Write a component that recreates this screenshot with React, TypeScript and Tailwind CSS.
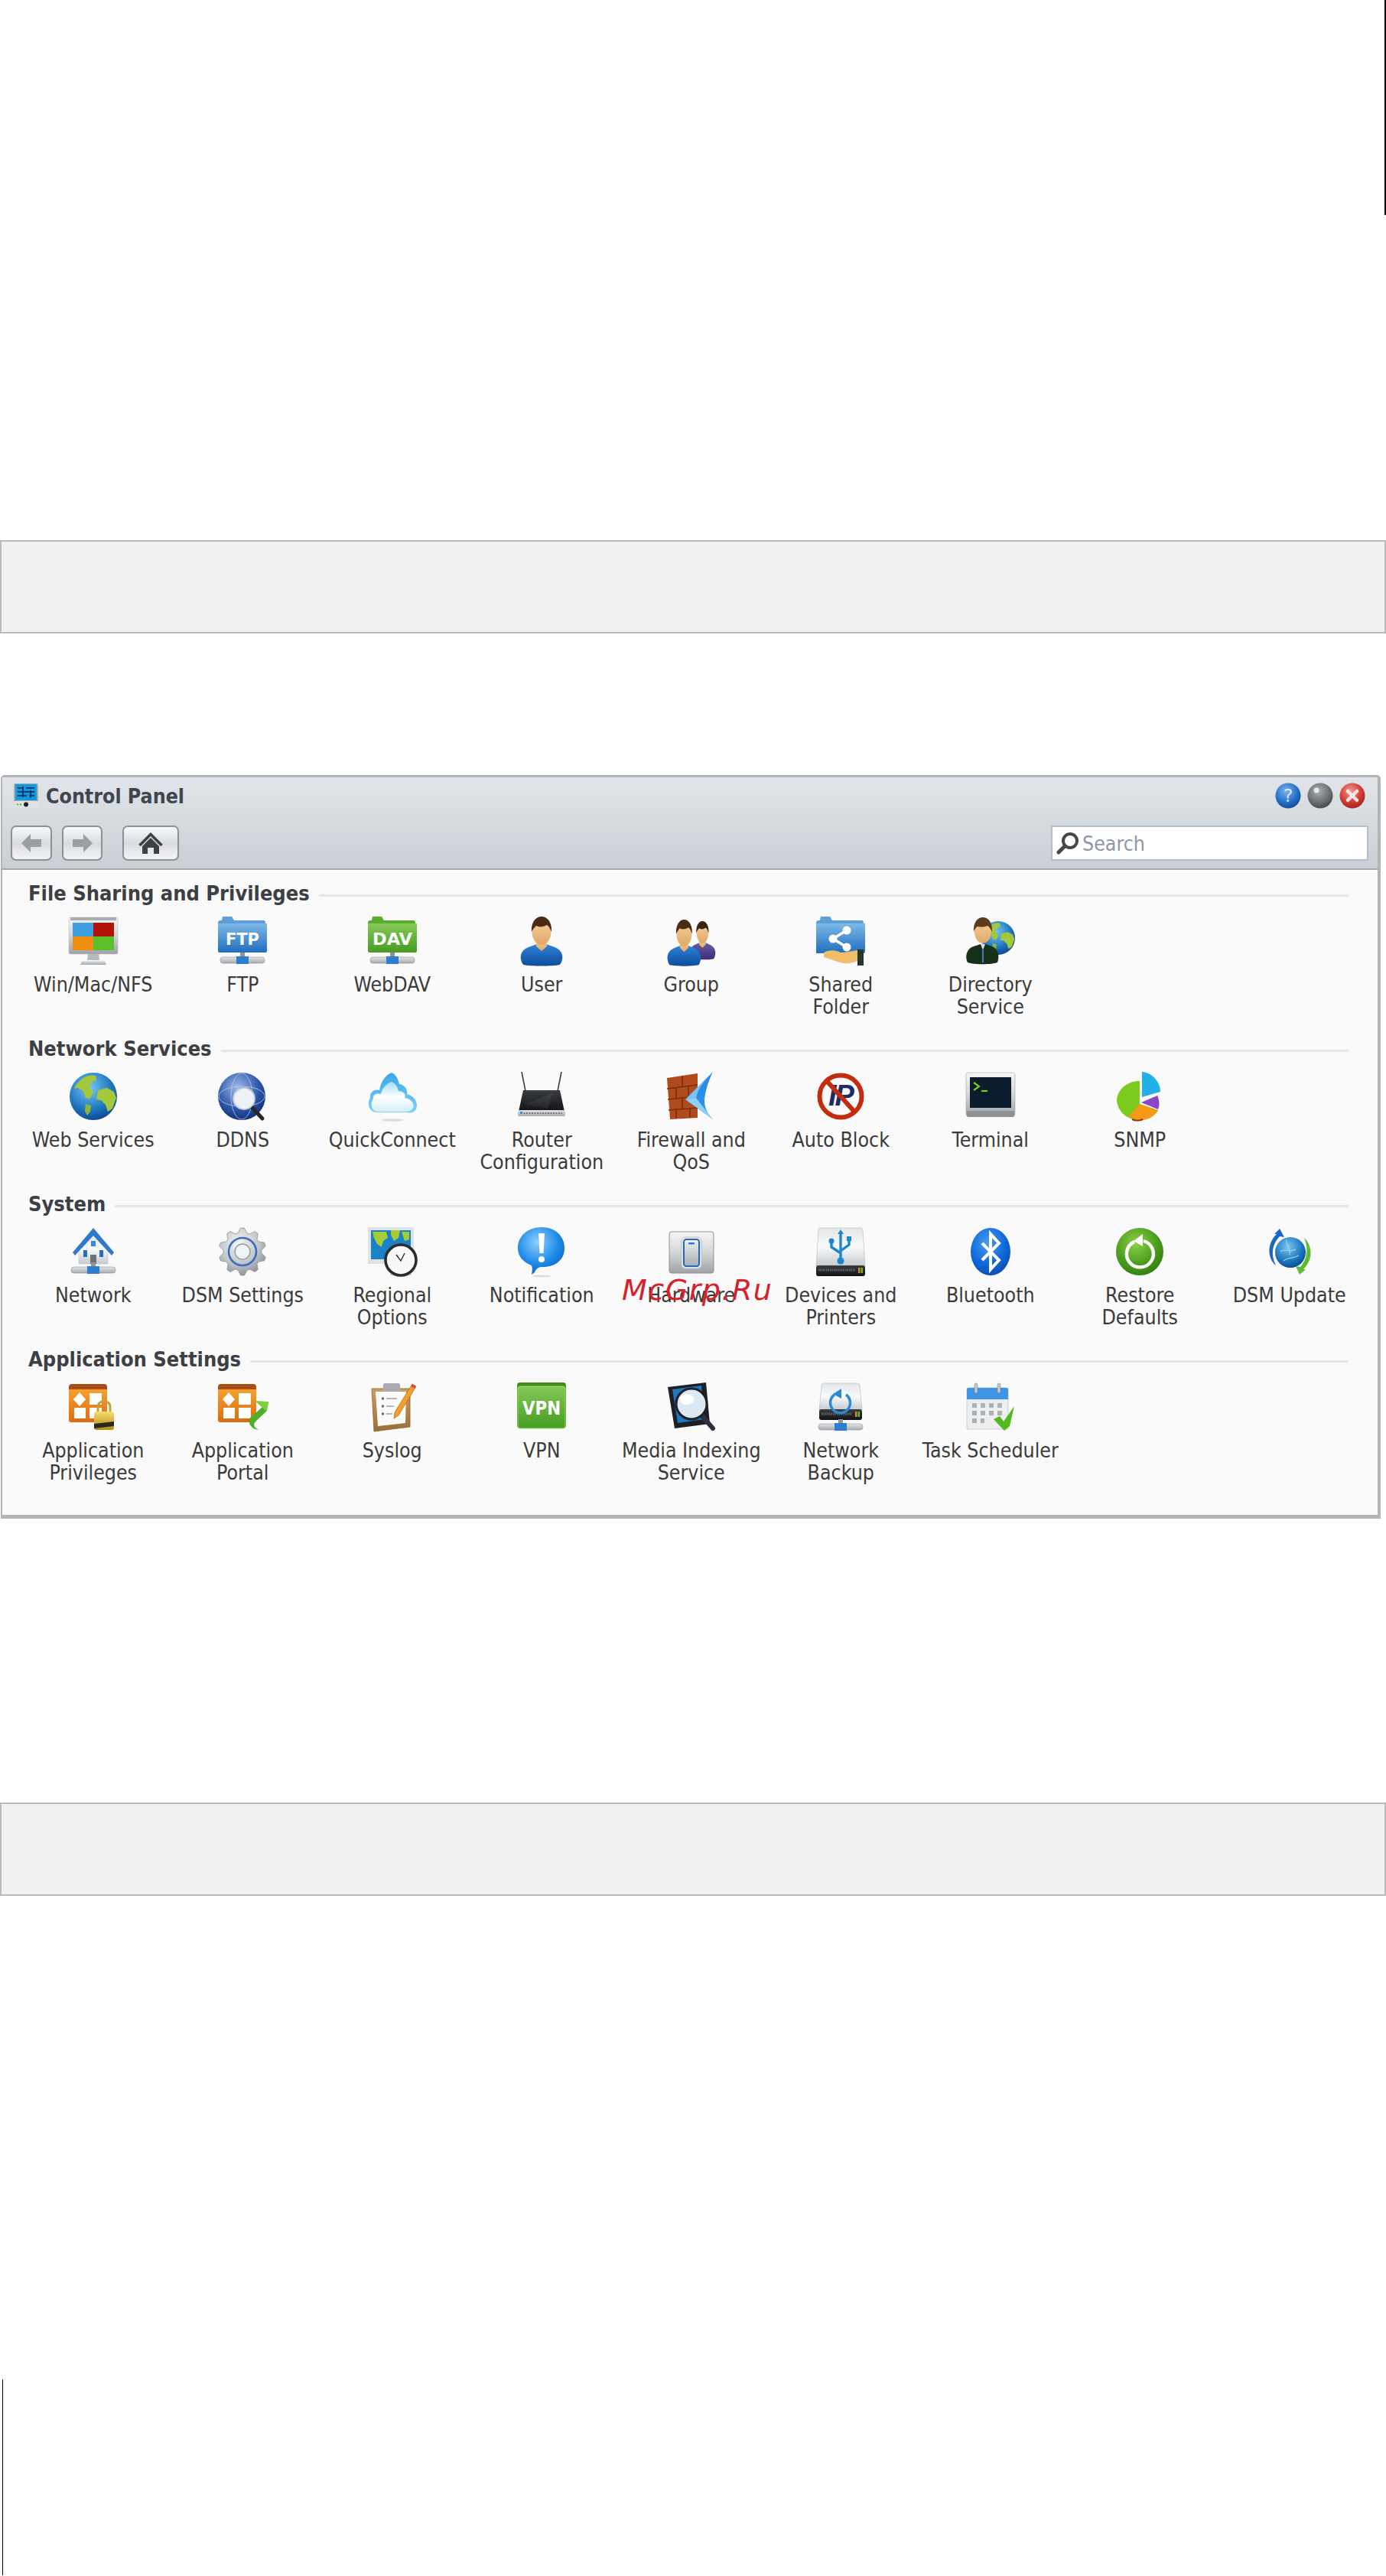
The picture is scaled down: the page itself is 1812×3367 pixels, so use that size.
import type { ReactNode } from 'react'

const SANS = 'DejaVu Sans'

// hand drawn stand-ins for the DSM icon set, all on a 64x64 box
function Defs() {
  const lin = (id: string, a: string, b: string, c?: string) => (
    <linearGradient id={id} x1="0" y1="0" x2="0" y2="1">
      <stop offset="0" stopColor={a} />
      {c && <stop offset="0.5" stopColor={b} />}
      <stop offset="1" stopColor={c ?? b} />
    </linearGradient>
  )
  const rad = (id: string, a: string, b: string, c: string) => (
    <radialGradient id={id} cx="0.42" cy="0.32" r="0.75">
      <stop offset="0" stopColor={a} />
      <stop offset="0.6" stopColor={b} />
      <stop offset="1" stopColor={c} />
    </radialGradient>
  )
  return (
    <svg className="w-0 h-0">
      <defs>
        {lin('fBlue', '#7db9e6', '#1f6ebf')}
        {lin('fGreen', '#84c957', '#469c22')}
        {lin('fOrange', '#f6a12e', '#dd6a0f')}
        {lin('metal', '#e4e6e8', '#a5a9ad')}
        {lin('metal2', '#f4f5f6', '#d3d6d9', '#9ea2a6')}
        {lin('phone', '#f0f1f2', '#a9adb1')}
        {lin('hdd', '#e3e6e8', '#f8f9fa', '#c6cacd')}
        {lin('shirt', '#2f83d8', '#0d4c9c')}
        {lin('purple', '#6a5aa8', '#3c2f72')}
        {lin('skin', '#f6d09a', '#e0a868')}
        {lin('dark', '#3a3d40', '#111214')}
        {lin('cloud', '#a4dcf8', '#ffffff', '#d4eefb')}
        {lin('cloudEdge', '#38a6ea', '#84d0f6')}
        {lin('gold', '#f6dd70', '#b48a18')}
        {lin('bar', '#c9a06a', '#9a6e36')}
        {rad('globe', '#7cc8f0', '#1f78c0', '#0b3f88')}
        {rad('navy', '#a0bce8', '#2c56a8', '#10286c')}
        {rad('bubble', '#8fd0fa', '#1c8ae8', '#0c60c0')}
        {rad('greenOrb', '#8cd04a', '#4a9c1c', '#2e7a10')}
        {rad('blueOrb', '#4a9cf0', '#0f68d8', '#0a4aa8')}
        {rad('gear', '#f4f5f6', '#bfc4c9', '#82878c')}
        {rad('helpOrb', '#7cb4ec', '#2470c8', '#10408c')}
        {rad('grayOrb', '#aeb0b2', '#6c7073', '#3e4245')}
        {rad('redOrb', '#f09a94', '#cf3a34', '#98201c')}
      </defs>
    </svg>
  )
}

function Icon({ children, className = 'w-16 h-16' }: { children: ReactNode; className?: string }) {
  return (
    <svg viewBox="0 0 64 64" className={className + ' overflow-visible'}>
      {children}
    </svg>
  )
}

function NetBase({ y = 53 }: { y?: number }) {
  return (
    <>
      <rect x="29" y={y - 6} width="6" height="8" fill="#8f9499" />
      <rect x="3" y={y} width="58" height="8" rx="3.5" fill="url(#metal)" stroke="#8f9499" strokeWidth=".6" />
      <rect x="24" y={y - 1} width="16" height="10" fill="#2c7fd0" />
    </>
  )
}

function Folder({ fill, tab }: { fill: string; tab: string }) {
  return (
    <>
      <path d="M2 5h3l1-5h12l3 5h39a3 3 0 0 1 2 3v5H0V7z" fill={tab} />
      <path d="M0 9h64v36a2 2 0 0 1-2 2H2a2 2 0 0 1-2-2z" fill={fill} />
    </>
  )
}

// 56 wide, 64 tall
function Person({ shirt = 'url(#shirt)', hair = '#4a2c14' }: { shirt?: string; hair?: string }) {
  return (
    <>
      <path d="M4 63c-6-9-4-19 7-23l11-4h12l11 4c11 4 13 14 7 23-10 2-38 2-48 0z" fill={shirt} />
      <path d="M21 30h14v9l-7 6-7-6z" fill="url(#skin)" />
      <ellipse cx="28" cy="20" rx="12.500" ry="17" fill="url(#skin)" />
      <path d="M15 20C14 8 20 0 28 0s14 8 13 20c-2-5-4-8-6-9-5 3-11 3-14 1-2 2-5 5-6 8z" fill={hair} />
    </>
  )
}

function Globe({ cx = 32, cy = 32, r = 31, fill = 'url(#globe)' }: { cx?: number; cy?: number; r?: number; fill?: string }) {
  const s = r / 31
  return (
    <g transform={`translate(${cx - 32 * s} ${cy - 32 * s}) scale(${s})`}>
      <circle cx="32" cy="32" r="31" fill={fill} />
      <path d="M14 12c5-6 15-9 21-7l1 6-7 3-2 7 5 5-4 9-6-1-3-9-7-4-5 1c1-4 4-7 7-10z" fill="#a4c83c" />
      <path d="M38 24l12-3 9 5 3 8-5 14-6 4-3-9-6-6-6-1z" fill="#a4c83c" />
      <path d="M22 42l7 2-1 8-4 5-3-6z" fill="#8cb834" />
    </g>
  )
}

function Hdd({ x = 6, w = 52, h = 60, children }: { x?: number; w?: number; h?: number; children?: ReactNode }) {
  return (
    <>
      <path d={`M${x + 6} 1h${w - 12}a3 3 0 0 1 3 3l3 ${h - 18}H${x}l3-${h - 18}a3 3 0 0 1 3-3z`} fill="url(#hdd)" stroke="#b4b8bc" strokeWidth=".6" />
      <rect x={x} y={h - 15} width={w} height="14" rx="3" fill="url(#dark)" />
      <path d={`M${x + 3} ${h - 9}h${w - 16}`} stroke="#60646a" strokeWidth="3" strokeDasharray="1.5 1" />
      <rect x={x + w - 9} y={h - 12} width="2.5" height="7" fill="#d08a20" />
      <rect x={x + w - 5.5} y={h - 12} width="2.5" height="7" fill="#6cb030" />
      {children}
    </>
  )
}

function AppGrid() {
  return (
    <>
      <path d="M0 6a4 4 0 0 1 4-4h42a4 4 0 0 1 4 4v6H0z" fill="#a84e14" />
      <path d="M0 9h50v40a3 3 0 0 1-3 3H3a3 3 0 0 1-3-3z" fill="url(#fOrange)" />
      <path d="M14 13l8 9-8 9-8-9z" fill="#fff" />
      <rect x="27" y="14" width="16" height="15" fill="#fff" />
      <rect x="7" y="33" width="15" height="14" fill="#fff" />
      <rect x="27" y="33" width="16" height="14" fill="#fff" />
    </>
  )
}

function gearPath() {
  const pts: string[] = []
  const teeth = 10
  for (let i = 0; i < teeth * 4; i++) {
    const a = (i / (teeth * 4)) * Math.PI * 2 - Math.PI / 2
    const r = i % 4 < 2 ? 31 : 25
    pts.push(`${(32 + Math.cos(a - 0.08) * r).toFixed(1)},${(32 + Math.sin(a - 0.08) * r).toFixed(1)}`)
  }
  return pts.join(' ')
}

const icons: Record<string, ReactNode> = {
  winmac: (
    <>
      <rect x="0" y="1" width="64" height="48" rx="2" fill="url(#metal2)" stroke="#c0c3c6" strokeWidth=".6" />
      <rect x="2" y="1" width="60" height="4" fill="#a8acb0" />
      <rect x="5" y="8" width="27" height="18" fill="#3f9fe0" />
      <rect x="32" y="8" width="27" height="18" fill="#b01408" />
      <rect x="5" y="26" width="27" height="18" fill="#f08e10" />
      <rect x="32" y="26" width="27" height="18" fill="#5cc02c" />
      <path d="M25 49h14l1 8H24z" fill="#b6babd" />
      <path d="M17 58h30l2 5H15z" fill="url(#metal)" />
    </>
  ),
  ftp: (
    <>
      <Folder fill="url(#fBlue)" tab="#5f9ed8" />
      <text x="32" y="37" textAnchor="middle" fontFamily={SANS} fontWeight="700" fontSize="22" fill="#fff" textLength="44" lengthAdjust="spacingAndGlyphs">FTP</text>
      <NetBase />
    </>
  ),
  dav: (
    <>
      <Folder fill="url(#fGreen)" tab="#5aae2c" />
      <text x="32" y="37" textAnchor="middle" fontFamily={SANS} fontWeight="700" fontSize="22" fill="#fff" textLength="52" lengthAdjust="spacingAndGlyphs">DAV</text>
      <NetBase />
    </>
  ),
  user: <g transform="translate(4 0)"><Person /></g>,
  group: (
    <>
      <g transform="translate(29 6) scale(.62 .78)"><Person shirt="url(#purple)" hair="#3a2412" /></g>
      <g transform="translate(0 4) scale(.8 .94)"><Person /></g>
    </>
  ),
  shared: (
    <>
      <path d="M2 5h3l1-5h12l3 5h39a3 3 0 0 1 2 3v5H0V7z" fill="#5f9ed8" />
      <path d="M0 9h64v37a2 2 0 0 1-2 2H0z" fill="url(#fBlue)" />
      <path d="M40 18L22 29l18 11" fill="none" stroke="#fff" strokeWidth="3.5" />
      <circle cx="40" cy="18" r="5.5" fill="#fff" />
      <circle cx="22" cy="29" r="5.5" fill="#fff" />
      <circle cx="40" cy="40" r="5.5" fill="#fff" />
      <path d="M10 47c8-4 16-3 22 0 6 0 14-2 22-3v14c-10 4-18 4-26 1l-18-6z" fill="#f2bd68" />
      <rect x="54" y="43" width="8" height="21" fill="#24372c" />
    </>
  ),
  directory: (
    <>
      <Globe cx="42" cy="28" r="22" />
      <path d="M2 60c-4-8-1-18 8-21l9-3h6l9 3c8 3 10 13 7 21-8 3-30 3-39 0z" fill="#17301a" />
      <path d="M19 36l3 8 3-8z" fill="#d8dde0" />
      <rect x="21" y="42" width="2" height="18" fill="#3d7fc0" />
      <ellipse cx="22" cy="20" rx="11" ry="15" fill="url(#skin)" />
      <path d="M10 20C9 8 15 1 22 1s13 7 12 19c-2-4-4-7-6-8-4 2-10 2-13 1-2 1-4 4-5 7z" fill="#5c3c1e" />
    </>
  ),
  web: <Globe />,
  ddns: (
    <>
      <circle cx="31" cy="32" r="31" fill="url(#navy)" />
      <ellipse cx="31" cy="32" rx="30" ry="13" fill="none" stroke="#b6ccf0" strokeWidth=".8" />
      <ellipse cx="31" cy="32" rx="14" ry="30" fill="none" stroke="#b6ccf0" strokeWidth=".8" />
      <path d="M44 46l14 15" stroke="#24262a" strokeWidth="5" strokeLinecap="round" />
      <circle cx="34" cy="35" r="14" fill="#eef2f8" stroke="#c0c8d4" strokeWidth="2" />
    </>
  ),
  quick: (
    <>
      <path d="M12 53C2 53-2 42 3 34c-1-8 6-12 12-10C17 12 23 4 31 1c7 3 9 11 10 15 8 1 11 8 10 13 11 3 15 12 12 20-3 5-8 5-12 4z" fill="url(#cloudEdge)" />
      <path d="M13 52C5 52 2 42 7 35c-1-5 5-8 10-6 2-8 7-14 14-16 6 2 8 8 9 12 7 0 10 5 8 9 9 1 13 8 11 13-2 4-6 5-10 5z" fill="url(#cloud)" />
      <ellipse cx="32" cy="63" rx="14" ry="1.8" fill="#dcdcdc" />
    </>
  ),
  router: (
    <>
      <path d="M6 0l5 25M58 0l-5 25" stroke="#3a3c3f" strokeWidth="1.6" />
      <path d="M8 24h48l6 28H2z" fill="url(#dark)" />
      <path d="M10 42l36-14-6 20z" fill="#fff" opacity=".06" />
      <rect x="1" y="50" width="62" height="8" rx="2" fill="url(#metal)" />
      <path d="M5 54h54" stroke="#555" strokeWidth="1.5" strokeDasharray="2 1.5" />
      <rect x="4" y="52" width="3" height="3" fill="#2e90e0" />
    </>
  ),
  firewall: (
    <>
      <path d="M0 8l40-6v58l-36 2z" fill="#b04a1c" />
      <path d="M0 22l40-5M1 36l39-4M2 50l38-3M20 5v14M12 21v14M28 19v14M20 34v15M12 48v13M30 47v13" stroke="#7a2c10" strokeWidth="1.6" />
      <path d="M60 0L24 36l36 26c-8-8-11-16-11-24s4-24 11-38z" fill="#2b8fe8" />
      <path d="M60 0L24 36l14-2c3-14 12-24 22-34z" fill="#7cc4f8" />
      <path d="M24 36l36 26-22-28z" fill="#8cd0f8" />
    </>
  ),
  block: (
    <>
      <text x="32" y="44" textAnchor="middle" fontFamily="Liberation Sans" fontStyle="italic" fontWeight="700" fontSize="38" fill="#1c2c66" letterSpacing="-2">IP</text>
      <circle cx="32" cy="32" r="27.5" fill="none" stroke="#c42c10" strokeWidth="6" />
      <path d="M14 12l36 40" stroke="#c42c10" strokeWidth="6" />
    </>
  ),
  terminal: (
    <>
      <rect x="0" y="1" width="64" height="57" rx="3" fill="url(#metal2)" stroke="#a2a6aa" strokeWidth=".6" />
      <rect x="1" y="51" width="62" height="8" rx="2" fill="#8d9195" />
      <rect x="5" y="7" width="54" height="40" fill="#0b1c2c" />
      <path d="M10 14l7 5-7 5" fill="none" stroke="#7ccc20" strokeWidth="2.2" />
      <path d="M20 25h8" stroke="#7ccc20" strokeWidth="2.2" />
    </>
  ),
  snmp: (
    <>
      <path d="M32 12v30L56 50C50 60 40 64 30 63 12 62 2 48 2 36 4 22 16 12 32 12z" fill="#7ccc20" />
      <path d="M32 42l24 8C50 60 40 64 30 63 26 62 20 60 18 58z" fill="#f49a18" />
      <path d="M34 40l21-9c3 6 3 14 1 18z" fill="#8a44c8" />
      <path d="M35 0c14 1 24 14 24 26l-24 7z" fill="#22b0e8" />
      <path d="M22 62c4 2 10 2 14 0" stroke="#a02c10" strokeWidth="2" fill="none" />
    </>
  ),
  network: (
    <>
      <path d="M32 9L13 30v18h38V30z" fill="url(#hdd)" stroke="#c4c8cc" strokeWidth=".6" />
      <path d="M32 1L5 33l3 4L32 11l24 26 3-4z" fill="#2f78cc" />
      <rect x="19" y="30" width="5" height="9" fill="#2870b8" />
      <rect x="40" y="30" width="5" height="9" fill="#2870b8" />
      <rect x="29" y="18" width="6" height="7" fill="#3a88d0" />
      <rect x="28" y="36" width="8" height="12" fill="#6e7276" />
      <NetBase y={52} />
    </>
  ),
  dsm: (
    <>
      <polygon points={gearPath()} fill="url(#gear)" stroke="#8d9296" strokeWidth=".8" />
      <circle cx="32" cy="32" r="18" fill="none" stroke="#3f6cc0" strokeWidth="2.6" />
      <circle cx="32" cy="32" r="10" fill="#f0f2f4" stroke="#9a9ea2" strokeWidth="1.5" />
    </>
  ),
  regional: (
    <>
      <rect x="0" y="0" width="60" height="48" fill="#dfe2e5" />
      <rect x="4" y="4" width="52" height="38" fill="#1b82c8" />
      <path d="M6 6h18l2 8-6 4-2 8-6-4-4-8zM30 4h12l-2 10-6 4-4-8zM44 6h10v10l-6 2z" fill="#a8cc34" />
      <ellipse cx="43" cy="62" rx="15" ry="2" fill="#d8d8d8" />
      <circle cx="43" cy="43" r="20" fill="#f8f8f8" stroke="#2a2c2f" strokeWidth="3.6" />
      <path d="M37 36l6 8 5-10" fill="none" stroke="#2a2c2f" strokeWidth="1.4" />
    </>
  ),
  notify: (
    <>
      <path d="M32 0c17 0 30 11 30 27S50 52 34 52c-4 0-8 0-11 7l-4 3c1-5 1-9 0-12C8 46 1 38 1 27 1 11 15 0 32 0z" fill="url(#bubble)" />
      <path d="M28 8h8l-1.500 26h-5z" fill="#fff" />
      <circle cx="32" cy="42" r="4" fill="#fff" />
      <ellipse cx="32" cy="64" rx="12" ry="1.500" fill="#dcdcdc" />
    </>
  ),
  hardware: (
    <>
      <rect x="3" y="6" width="58" height="54" rx="3" fill="url(#metal2)" stroke="#8f9397" strokeWidth="1" />
      <rect x="19" y="13" width="26" height="41" rx="5" fill="#e4e6e8" stroke="#c4c7ca" strokeWidth="1" />
      <rect x="22" y="16" width="20" height="35" rx="3.500" fill="url(#phone)" stroke="#2a68b4" strokeWidth="2" />
      <rect x="28" y="20" width="8" height="2.500" rx="1" fill="#2e78e8" />
    </>
  ),
  devices: (
    <Hdd x={0} w={64} h={65}>
      <g stroke="#1f86d0" strokeWidth="3.4" fill="none">
        <path d="M32 6v38M20 20v6l12 8M43 16v7l-11 8" />
      </g>
      <path d="M32 3l4 6h-8z" fill="#1f86d0" />
      <circle cx="20" cy="18" r="3.500" fill="#1f86d0" />
      <rect x="40" y="12" width="6" height="6" fill="#1f86d0" />
      <circle cx="32" cy="44" r="4.500" fill="#1f86d0" />
    </Hdd>
  ),
  bluetooth: (
    <>
      <ellipse cx="32" cy="32" rx="26" ry="31" fill="url(#blueOrb)" />
      <path d="M21 21l22 22-11 12V9l11 12-22 22" fill="none" stroke="#fff" strokeWidth="4" />
    </>
  ),
  restore: (
    <>
      <circle cx="32" cy="32" r="31" fill="url(#greenOrb)" />
      <path d="M25 19a17.500 17.500 0 1 0 12-1" fill="none" stroke="#fff" strokeWidth="4.400" />
      <path d="M36 9l-12 9 12 7z" fill="#fff" />
    </>
  ),
  update: (
    <>
      <circle cx="33" cy="33" r="20" fill="url(#globe)" />
      <path d="M20 32c6-5 12 2 20-3M24 44c6-5 10-2 20-7M28 16c-2 8 6 10 4 20" fill="none" stroke="#9cd4ee" strokeWidth="1.200" />
      <path d="M19 2l6 11-6-1C9 22 7 36 14 50c-9-7-14-26 1-41l-3 0z" fill="#1d66c4" />
      <path d="M45 62l-5-11 6 1c9-10 11-24 5-38 9 8 14 26-1 41l3 0z" fill="#5cbc30" />
    </>
  ),
  privileges: (
    <>
      <AppGrid />
      <path d="M38 38v-6c0-10 16-10 16 0v6" fill="none" stroke="#c4a238" strokeWidth="3" />
      <rect x="33" y="38" width="26" height="24" rx="3" fill="url(#gold)" />
      <path d="M33 54l26-3v6l-26 3z" fill="#2c2a1c" />
    </>
  ),
  portal: (
    <>
      <AppGrid />
      <path d="M66 25L41 47c-2 7 3 14 12 15 -5-3-7-6-5-10l15-14z" fill="#4fb028" />
      <path d="M66 25l-18-1 16 14z" fill="#7cd038" />
    </>
  ),
  syslog: (
    <>
      <path d="M5 8h50v50L8 64z" fill="url(#bar)" stroke="#8c622c" strokeWidth=".8" />
      <path d="M10 12h40l-1 41-36 4z" fill="#fbfbfb" />
      <rect x="20" y="1" width="22" height="11" rx="2" fill="#a8acb0" />
      <path d="M18 21h3M18 31h3M18 41h3" stroke="#66696d" strokeWidth="3" />
      <path d="M24 21h14M24 31h10M24 41h8" stroke="#b4b8bc" strokeWidth="2" />
      <path d="M58 2l5 3-23 38-6 4 1-8z" fill="#f0a030" stroke="#b86c14" strokeWidth=".8" />
      <path d="M58 2l5 3-2 3-5-3z" fill="#d85040" />
    </>
  ),
  vpn: (
    <>
      <rect x="0" y="0" width="64" height="60" rx="4" fill="#3f8c18" />
      <rect x="1" y="5" width="62" height="55" rx="3" fill="url(#fGreen)" stroke="#9cdc70" strokeWidth="1" />
      <text x="32" y="42" textAnchor="middle" fontFamily={SANS} fontWeight="700" fontSize="25" fill="#fff" textLength="50" lengthAdjust="spacingAndGlyphs">VPN</text>
    </>
  ),
  media: (
    <>
      <path d="M1 6l50-6 5 54-46 6z" fill="#1d1f24" />
      <path d="M7 9l38-5 4 44-35 5z" fill="#1c78c0" />
      <path d="M46 44l14 16" stroke="#2e3042" strokeWidth="6" strokeLinecap="round" />
      <circle cx="32" cy="28" r="20" fill="#dce8f4" stroke="#1f1f24" strokeWidth="3" />
      <ellipse cx="26" cy="22" rx="9" ry="7" fill="#fff" />
    </>
  ),
  backup: (
    <Hdd x={4} w={56} h={50}>
      <path d="M24 16a13 13 0 1 0 15 0" fill="none" stroke="#2a8ad4" strokeWidth="3.400" />
      <path d="M33 8l-11 7 11 6z" fill="#2a8ad4" />
      <NetBase y={54} />
    </Hdd>
  ),
  task: (
    <>
      <rect x="1" y="7" width="54" height="54" rx="2" fill="#eceef0" stroke="#b4b8bc" strokeWidth=".6" />
      <path d="M1 9a2 2 0 0 1 2-2h50a2 2 0 0 1 2 2v13H1z" fill="#3f94e4" />
      <rect x="11" y="1" width="4" height="13" rx="2" fill="#c6c8ca" stroke="#777" strokeWidth=".5" />
      <rect x="41" y="1" width="4" height="13" rx="2" fill="#c6c8ca" stroke="#777" strokeWidth=".5" />
      <path d="M8 30h40M8 40h40M8 50h16" stroke="#aeb2b6" strokeWidth="6" strokeDasharray="6 5" />
      <path d="M36 48l8-4 5 7 14-20-6 26-7 6z" fill="#52b81c" />
    </>
  ),
}

type Item = { icon: string; lines: string[]; mark?: boolean }

const sections: { title: string; items: Item[] }[] = [
  {
    title: 'File Sharing and Privileges',
    items: [
      { icon: 'winmac', lines: ['Win/Mac/NFS'] },
      { icon: 'ftp', lines: ['FTP'] },
      { icon: 'dav', lines: ['WebDAV'] },
      { icon: 'user', lines: ['User'] },
      { icon: 'group', lines: ['Group'] },
      { icon: 'shared', lines: ['Shared', 'Folder'] },
      { icon: 'directory', lines: ['Directory', 'Service'] },
    ],
  },
  {
    title: 'Network Services',
    items: [
      { icon: 'web', lines: ['Web Services'] },
      { icon: 'ddns', lines: ['DDNS'] },
      { icon: 'quick', lines: ['QuickConnect'] },
      { icon: 'router', lines: ['Router', 'Configuration'] },
      { icon: 'firewall', lines: ['Firewall and', 'QoS'] },
      { icon: 'block', lines: ['Auto Block'] },
      { icon: 'terminal', lines: ['Terminal'] },
      { icon: 'snmp', lines: ['SNMP'] },
    ],
  },
  {
    title: 'System',
    items: [
      { icon: 'network', lines: ['Network'] },
      { icon: 'dsm', lines: ['DSM Settings'] },
      { icon: 'regional', lines: ['Regional', 'Options'] },
      { icon: 'notify', lines: ['Notification'] },
      { icon: 'hardware', lines: ['Hardware'], mark: true },
      { icon: 'devices', lines: ['Devices and', 'Printers'] },
      { icon: 'bluetooth', lines: ['Bluetooth'] },
      { icon: 'restore', lines: ['Restore', 'Defaults'] },
      { icon: 'update', lines: ['DSM Update'] },
    ],
  },
  {
    title: 'Application Settings',
    items: [
      { icon: 'privileges', lines: ['Application', 'Privileges'] },
      { icon: 'portal', lines: ['Application', 'Portal'] },
      { icon: 'syslog', lines: ['Syslog'] },
      { icon: 'vpn', lines: ['VPN'] },
      { icon: 'media', lines: ['Media Indexing', 'Service'] },
      { icon: 'backup', lines: ['Network', 'Backup'] },
      { icon: 'task', lines: ['Task Scheduler'] },
    ],
  },
]

function Orb({ fill, children }: { fill: string; children?: ReactNode }) {
  return (
    <svg viewBox="0 0 34 34" className="w-[34px] h-[34px]">
      <circle cx="17" cy="17" r="16.500" fill={fill} />
      {children}
    </svg>
  )
}

function NavButton({ width, children }: { width: string; children: ReactNode }) {
  return (
    <div className={width + ' h-[46px] rounded-[7px] border-2 border-[#8c9196] bg-linear-to-b from-[#f8f9f9] via-[#d9dcdf] to-[#f2f3f4] flex items-center justify-center'}>
      {children}
    </div>
  )
}

function Tile({ item }: { item: Item }) {
  return (
    <div className="relative flex flex-col items-center">
      <Icon>{icons[item.icon]}</Icon>
      <div className="mt-[10px] text-center text-[26.5px] leading-[29px] text-[#3b3b3b] font-['DejaVu_Sans_Condensed','DejaVu_Sans',sans-serif] whitespace-nowrap">
        {item.lines.map(l => (
          <div key={l}>{l}</div>
        ))}
      </div>
      {item.mark && (
        <span className="absolute left-[7px] top-[59px] text-[38px] leading-[46px] italic text-[#d8202a] tracking-[1.5px] font-['DejaVu_Sans',sans-serif] whitespace-nowrap">
          McGrp.Ru
        </span>
      )}
    </div>
  )
}

function Section({ title, items }: { title: string; items: Item[] }) {
  return (
    <section className="h-[203px]">
      <div className="ml-[34px] mr-[38px] h-[29px] flex items-center gap-[12px]">
        <h2 className="text-[27px] leading-[29px] font-bold text-[#3c4045] font-['DejaVu_Sans_Condensed','DejaVu_Sans',sans-serif] whitespace-nowrap">
          {title}
        </h2>
        <div className="flex-1 h-[3px] mt-[6px] bg-[#e3e7eb]" />
      </div>
      <div className="ml-[21px] mt-[16px] grid grid-cols-[repeat(9,195.5px)]">
        {items.map(it => (
          <Tile key={it.icon} item={it} />
        ))}
      </div>
    </section>
  )
}

function NoteBox() {
  return <div className="h-[122px] border-2 border-[#bbbbbb] bg-[#f1f1f1]" />
}

export default function App() {
  return (
    <div className="w-[1812px] h-[3367px] bg-white flex flex-col font-['DejaVu_Sans',sans-serif]">
      <Defs />
      <div className="h-[706px] flex justify-end items-start">
        <div className="w-[2px] h-[281px] bg-black" />
      </div>
      <NoteBox />
      <div className="h-[185px]" />

      <div className="ml-px w-[1804px] h-[972px] border-t-[3px] border-l-[2px] border-r-[4px] border-b-[5px] border-[#b2b4b6] rounded-t-[5px] flex flex-col">
        <header className="h-[121px] border-b-2 border-[#a6a8aa] bg-linear-to-b from-[#e1e5e9] to-[#c9cfd5] flex flex-col">
          <div className="mt-[8px] pl-[15px] pr-[16px] h-[32px] flex items-center justify-between">
            <div className="flex items-center gap-[10px]">
              <svg viewBox="0 0 32 32" className="w-[32px] h-[32px]">
                <rect x="0" y="0" width="32" height="32" rx="2" fill="#a8acb0" />
                <rect x="2" y="1" width="28" height="21" fill="#149ad8" />
                <path d="M5 6h8M16 6h11M5 11h22M5 16h12M20 16h7M12 4v14M22 9v10" stroke="#0d3d78" strokeWidth="2" />
                <rect x="0" y="23" width="32" height="9" rx="1" fill="#dfe2e4" />
                <circle cx="5" cy="27.500" r="1.200" fill="#52c030" />
                <circle cx="9" cy="27.500" r="1.200" fill="#52c030" />
                <circle cx="16" cy="27.500" r="3" fill="#222" />
              </svg>
              <span className="text-[26.5px] leading-[29px] font-bold text-[#3f4650] font-['DejaVu_Sans_Condensed','DejaVu_Sans',sans-serif]">Control Panel</span>
            </div>
            <div className="flex items-center gap-[8px]">
              <Orb fill="url(#helpOrb)">
                <text x="17" y="25" textAnchor="middle" fontFamily={SANS} fontSize="23" fill="#dce8f6">?</text>
              </Orb>
              <Orb fill="url(#grayOrb)">
                <circle cx="12" cy="10" r="3.500" fill="#e8e8e8" />
              </Orb>
              <Orb fill="url(#redOrb)">
                <path d="M11 11l12 12M23 11L11 23" stroke="#f8e6e4" strokeWidth="4.500" strokeLinecap="round" />
              </Orb>
            </div>
          </div>
          <div className="mt-[23px] pl-[11px] pr-[12px] h-[46px] flex items-center">
            <NavButton width="w-[54px]">
              <svg viewBox="0 0 28 26" className="w-[28px] h-[26px]">
                <path d="M13 1L1 13l12 12v-7h14V8H13z" fill="#9b9fa3" />
              </svg>
            </NavButton>
            <div className="ml-[13px]">
              <NavButton width="w-[53px]">
                <svg viewBox="0 0 28 26" className="w-[28px] h-[26px]">
                  <path d="M15 1l12 12-12 12v-7H1V8h14z" fill="#9b9fa3" />
                </svg>
              </NavButton>
            </div>
            <div className="ml-[26px]">
              <NavButton width="w-[74px]">
                <svg viewBox="0 0 32 30" className="w-[32px] h-[30px]">
                  <path d="M16 1L0 17l3 2L16 6l13 13 3-2z" fill="#3e4144" />
                  <path d="M16 8L5 19v10h7v-8h8v8h7V19z" fill="#3e4144" />
                </svg>
              </NavButton>
            </div>
            <div className="ml-auto w-[415px] h-[46px] bg-white border-2 border-[#b6bccb] flex items-center pl-[5px] gap-[4px]">
              <svg viewBox="0 0 30 30" className="w-[30px] h-[30px]">
                <circle cx="18" cy="12" r="9" fill="none" stroke="#45484b" strokeWidth="4" />
                <path d="M11 19l-8 8" stroke="#45484b" strokeWidth="5" strokeLinecap="round" />
              </svg>
              <span className="text-[26.5px] leading-[29px] text-[#8d98a8] font-['DejaVu_Sans_Condensed','DejaVu_Sans',sans-serif]">Search</span>
            </div>
          </div>
        </header>
        <div className="flex-1 bg-[#fafafa] pt-[16px]">
          {sections.map(s => (
            <Section key={s.title} title={s.title} items={s.items} />
          ))}
        </div>
      </div>

      <div className="h-[371px]" />
      <NoteBox />
      <div className="flex-1 flex items-end pl-[3px]">
        <div className="w-px h-[256px] mb-px bg-black" />
      </div>
    </div>
  )
}
